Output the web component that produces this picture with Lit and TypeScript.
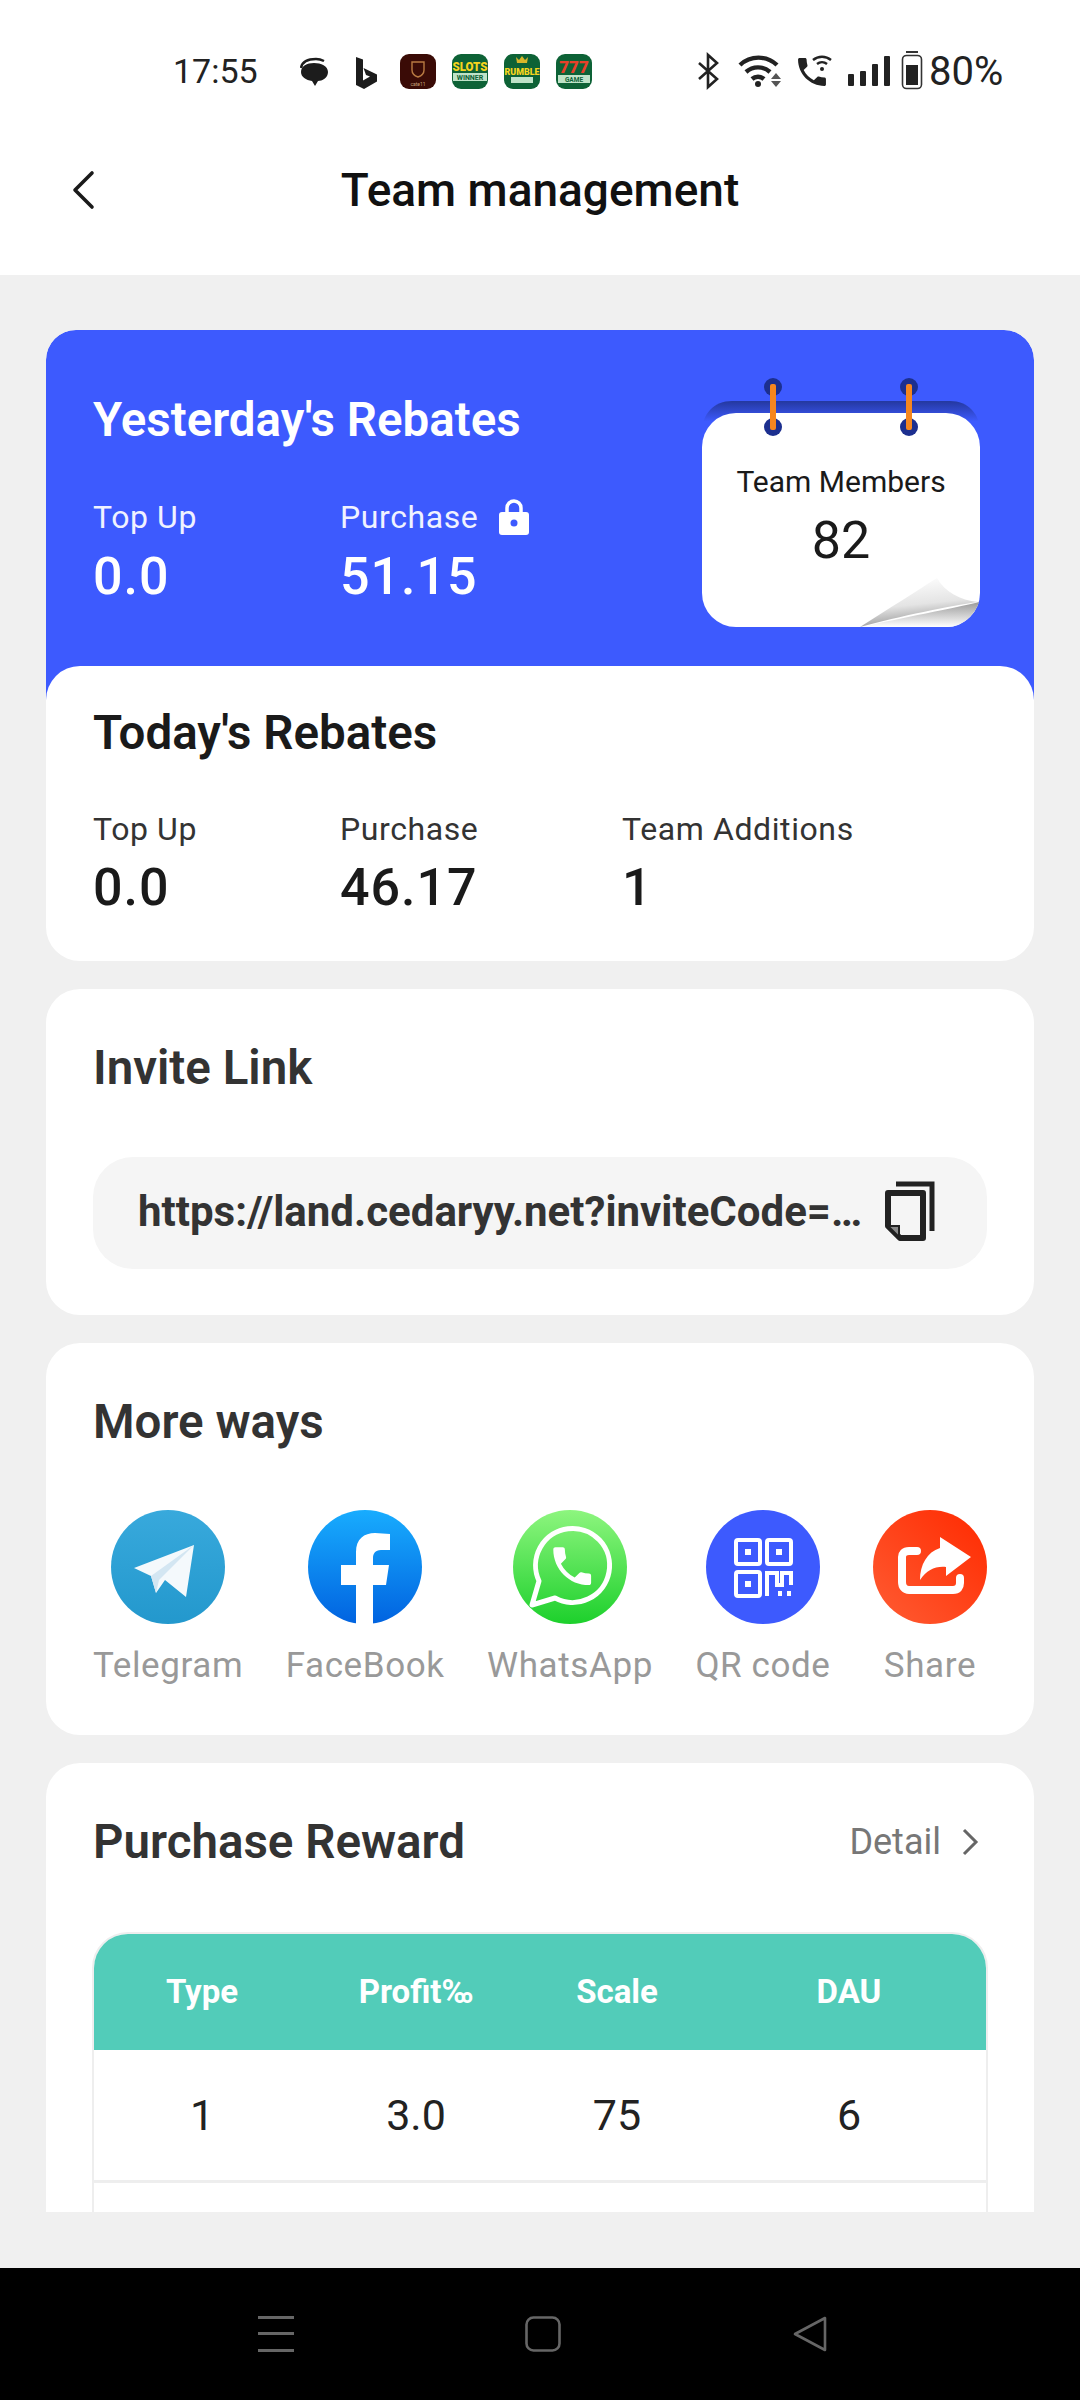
import {LitElement, html, css, svg} from 'lit';
import {customElement} from 'lit/decorators.js';

const shareItems = [
    {label: 'Telegram', icon: 'telegram'},
    {label: 'FaceBook', icon: 'facebook'},
    {label: 'WhatsApp', icon: 'whatsapp'},
    {label: 'QR code', icon: 'qr'},
    {label: 'Share', icon: 'share'},
];

const CALL_PATH = 'M6.62 10.79c1.44 2.83 3.76 5.14 6.59 6.59l2.2-2.2c.27-.27.67-.36 1.02-.24 1.12.37 2.33.57 3.57.57.55 0 1 .45 1 1V20c0 .55-.45 1-1 1-9.39 0-17-7.61-17-17 0-.55.45-1 1-1h3.5c.55 0 1 .45 1 1 0 1.25.2 2.45.57 3.57.11.35.03.74-.25 1.02l-2.2 2.2z';

function shareIcon(name: string) {
    switch (name) {
        case 'telegram':
            return svg`
                <defs><linearGradient id="tg" x1="0" y1="0" x2="0" y2="1"><stop offset="0" stop-color="#38a9dc"/><stop offset="1" stop-color="#2398cd"/></linearGradient></defs>
                <circle cx="57" cy="57" r="57" fill="url(#tg)"/>
                <path d="M83 35L23 58l17 8 5 17 9-13 21 17z" fill="#f4f9fc"/>
                <path d="M83 35L40 66l5 17 3-13z" fill="#d3e6f2"/>`;
        case 'facebook':
            return svg`
                <defs><linearGradient id="fb" x1="0" y1="0" x2="0" y2="1"><stop offset="0" stop-color="#18acfe"/><stop offset="1" stop-color="#0163e0"/></linearGradient></defs>
                <circle cx="57" cy="57" r="57" fill="url(#fb)"/>
                <path d="M48 114V75H33V55H48V42C48 29 56 23 67 23C72 23 77 24 82 24V40H73C67 40 65 44 65 48V55H81L78 75H65V114Z" fill="#fff"/>`;
        case 'whatsapp':
            return svg`
                <defs><linearGradient id="wa" x1="0" y1="0" x2="0" y2="1"><stop offset="0" stop-color="#8df57e"/><stop offset="1" stop-color="#1dd02c"/></linearGradient></defs>
                <circle cx="57" cy="57" r="57" fill="url(#wa)"/>
                <path d="M19 95l7-24A37 37 0 1 1 42 88z" fill="none" stroke="#fff" stroke-width="5" stroke-linejoin="round"/>
                <path d="${CALL_PATH}" fill="#fff" transform="translate(34 31) scale(2.1)"/>`;
        case 'qr':
            return svg`
                <circle cx="57" cy="57" r="57" fill="#3d5afe"/>
                <g fill="none" stroke="#fff" stroke-width="4">
                    <rect x="30" y="30" width="24" height="24" rx="2"/>
                    <rect x="61" y="30" width="24" height="24" rx="2"/>
                    <rect x="30" y="62" width="24" height="24" rx="2"/>
                    <path d="M61 86V63h10v12h5V63h9v12"/>
                </g>
                <g fill="#fff">
                    <rect x="39" y="39" width="6" height="6"/>
                    <rect x="70" y="39" width="6" height="6"/>
                    <rect x="39" y="71" width="6" height="6"/>
                    <rect x="72" y="81" width="4" height="5"/>
                    <rect x="81" y="81" width="4" height="5"/>
                </g>`;
        default:
            return svg`
                <defs><linearGradient id="sh" x1="1" y1="0" x2="0" y2="1"><stop offset="0" stop-color="#ff2a00"/><stop offset="1" stop-color="#ff5c33"/></linearGradient></defs>
                <circle cx="57" cy="57" r="57" fill="url(#sh)"/>
                <path d="M44 41H36C31 41 29 44 29 47V72C29 77 32 80 36 80H80C85 80 87 77 87 73V68" fill="none" stroke="#fff" stroke-width="8" stroke-linecap="round"/>
                <path d="M67 27L98 47 73 66V57C62 56 54 60 47 70 47 55 54 42 67 38z" fill="#fff"/>`;
    }
}

@customElement('app-root')
export class AppRoot extends LitElement {
    static styles = css`
        :host {
            display: block;
            width: 1080px;
            height: 2400px;
            overflow: hidden;
            font-family: Roboto, "Noto Sans", sans-serif;
            background: #f0f0f0;
            color: #1a1a1a;
        }

        .page {
            display: flex;
            flex-direction: column;
            height: 2400px;
        }

        .top {
            background: #fff;
            height: 275px;
            flex: none;
        }

        .status {
            display: flex;
            align-items: center;
            height: 94px;
            padding: 24px 0 0 173px;
        }

        .time {
            width: 127px;
            font-size: 34px;
            color: #222;
        }

        .status svg {
            display: block;
            height: 40px;
        }

        .apps {
            width: 292px;
            margin-right: 106px;
        }

        .system {
            width: 226px;
            margin-right: 5px;
        }

        .battery {
            font-size: 40px;
            color: #222;
        }

        .bar {
            display: flex;
            align-items: center;
            justify-content: center;
            position: relative;
            height: 144px;
            font-size: 46px;
            font-weight: 500;
            color: #111;
        }

        .back {
            position: absolute;
            left: 70px;
            top: 52px;
            width: 26px;
            height: 40px;
        }

        .content {
            flex: none;
            height: 1882px;
            margin: 55px 46px 0 46px;
            overflow: hidden;
            border-radius: 30px 30px 0 0;
        }

        .blue {
            display: flex;
            justify-content: space-between;
            height: 370px;
            box-sizing: border-box;
            padding: 0 54px 0 47px;
            background: #3d5afe;
            color: #fff;
            border-radius: 30px 30px 0 0;
        }

        .card {
            background: #fff;
            border-radius: 34px;
            padding: 0 47px;
            margin-bottom: 28px;
        }

        .today {
            position: relative;
            height: 295px;
            margin-top: -34px;
        }

        .h {
            font-size: 47.5px;
            font-weight: 600;
            line-height: 60px;
            color: #333;
        }

        .blue .h {
            padding-top: 60px;
            color: #fff;
        }

        .today .h {
            padding-top: 37px;
            color: #1a1a1a;
        }

        .stats {
            display: grid;
            grid-template-columns: 247px 282px 1fr;
            margin-top: 48px;
        }

        .blue .stats {
            grid-template-columns: 247px 1fr;
            margin-top: 49px;
        }

        .label {
            display: flex;
            align-items: center;
            gap: 20px;
            font-size: 32px;
            line-height: 36px;
            letter-spacing: 0.6px;
            color: #333;
        }

        .blue .label {
            color: #f0f2ff;
        }

        .value {
            font-size: 52px;
            font-weight: 500;
            line-height: 60px;
            margin-top: 11px;
            letter-spacing: 1px;
        }

        .blue .value {
            margin-top: 12px;
        }

        .calendar {
            position: relative;
            width: 278px;
            height: 240px;
            margin-top: 57px;
            display: flex;
            flex-direction: column;
            align-items: center;
            color: #1a1a1a;
        }

        .calendar svg {
            position: absolute;
            left: 0;
            top: 0;
        }

        .calendar .name {
            position: relative;
            margin-top: 75px;
            font-size: 30px;
            line-height: 40px;
        }

        .calendar .num {
            position: relative;
            margin-top: 9px;
            font-size: 52px;
            line-height: 60px;
        }

        .invite {
            height: 326px;
            box-sizing: border-box;
            padding-top: 49px;
        }

        .pill {
            display: flex;
            align-items: center;
            justify-content: space-between;
            height: 112px;
            margin-top: 59px;
            padding: 0 52px 4px 45px;
            box-sizing: border-box;
            background: #f5f5f5;
            border-radius: 40px;
            font-size: 42px;
            font-weight: 700;
            color: #333;
        }

        .ways {
            height: 392px;
            box-sizing: border-box;
            padding-top: 49px;
        }

        .ways-row {
            display: flex;
            justify-content: space-between;
            margin-top: 58px;
        }

        .way {
            display: flex;
            flex-direction: column;
            align-items: center;
            font-size: 35px;
            line-height: 40px;
            letter-spacing: 0.6px;
            color: #999;
        }

        .way svg {
            display: block;
            margin-bottom: 22px;
        }

        .reward {
            padding-top: 49px;
            border-radius: 34px 34px 0 0;
            height: 449px;
            box-sizing: border-box;
            margin-bottom: 0;
        }

        .reward-head {
            display: flex;
            align-items: center;
            justify-content: space-between;
        }

        .detail {
            display: flex;
            align-items: center;
            gap: 20px;
            padding-right: 8px;
            font-size: 36px;
            color: #777;
        }

        .table {
            margin: 60px -1px 0;
            border: 2px solid #eee;
            border-radius: 36px 36px 0 0;
            overflow: hidden;
        }

        .row {
            display: grid;
            grid-template-columns: 216px 212px 190px 1fr;
            align-items: center;
            text-align: center;
        }

        .row.head {
            height: 116px;
            padding-bottom: 2px;
            box-sizing: border-box;
            background: #52ccb9;
            color: #fff;
            font-size: 33px;
            font-weight: 700;
        }

        .row.body {
            height: 130px;
            border-bottom: 3px solid #eee;
            font-size: 43px;
            color: #222;
        }

        .nav {
            margin-top: 56px;
            flex: 1;
            background: #000;
            display: flex;
            align-items: center;
            justify-content: center;
            gap: 231px;
            padding-left: 6px;
        }

        .nav svg {
            display: block;
        }
    `;

    private renderApps() {
        return html`
            <svg class="apps" viewBox="300 51 292 40" width="292" height="40">
                <path d="M301 72c0-6 6-9 13-9s14 3 14 9-6 9-10 9l-3 5-3-5c-6-1-11-4-11-9z" fill="#1c1c1c"/>
                <path d="M301 68c1-6 7-9 15-9 3 0 6 1 8 2" fill="none" stroke="#1c1c1c" stroke-width="2.5"/>
                <path d="M356 57l7 2.5v21l7-4-4-1.5-2.5-7 13.5 6.5v7l-13 7.5-8-4z" fill="#1c1c1c"/>
                <rect x="400" y="54" width="36" height="35" rx="9" fill="#3a0b06"/>
                <path d="M412 62h12v8c0 4-3 6-6 7-3-1-6-3-6-7z" fill="none" stroke="#b87a42" stroke-width="1.4"/>
                <text x="418" y="86" text-anchor="middle" font-size="5" fill="#c9a27a" font-family="Roboto">cate11</text>
                <rect x="452" y="54" width="36" height="35" rx="9" fill="#0d6236"/>
                <text x="470" y="71" text-anchor="middle" font-size="12" font-weight="900" fill="#f7d51d" font-family="Roboto" textLength="35" lengthAdjust="spacingAndGlyphs">SLOTS</text>
                <rect x="453" y="73" width="34" height="8" fill="#bfe3c8"/>
                <text x="470" y="80" text-anchor="middle" font-size="7" font-weight="700" fill="#0d6236" font-family="Roboto">WINNER</text>
                <rect x="504" y="54" width="36" height="35" rx="9" fill="#0d6236"/>
                <path d="M517 63l-1-6 3 3 3-4 3 4 3-3-1 6z" fill="#d8b62a"/>
                <text x="522" y="75" text-anchor="middle" font-size="9.5" font-weight="900" fill="#f7d51d" font-family="Roboto" textLength="35" lengthAdjust="spacingAndGlyphs">RUMBLE</text>
                <rect x="511" y="77" width="22" height="6" fill="#bfe3c8"/>
                <rect x="556" y="54" width="36" height="35" rx="9" fill="#0d6236"/>
                <text x="574" y="73" text-anchor="middle" font-size="17" font-weight="900" fill="#e8402a" font-family="Roboto">777</text>
                <rect x="558" y="75" width="32" height="8" fill="#bfe3c8"/>
                <text x="574" y="82" text-anchor="middle" font-size="6.5" font-weight="700" fill="#0d6236" font-family="Roboto">GAME</text>
            </svg>
        `;
    }

    private renderSystem() {
        return html`
            <svg class="system" viewBox="698 51 226 40" width="226" height="40">
                <path d="M699 63l18 16-9 8V55l9 8-18 16" fill="none" stroke="#222" stroke-width="2.6"/>
                <g fill="none" stroke="#222" stroke-width="4.4">
                    <path d="M740 65A27 27 0 0 1 777 65"/>
                    <path d="M746 72A18 18 0 0 1 770 72"/>
                    <path d="M752 79A9 9 0 0 1 764 79"/>
                </g>
                <circle cx="758" cy="84" r="3" fill="#222"/>
                <path d="M776 73l5 6h-10zM776 87l5-6h-10z" fill="#555"/>
                <path d="${CALL_PATH}" fill="#222" transform="translate(793.4 53.4) scale(1.55)"/>
                <g fill="none" stroke="#222" stroke-width="2.4">
                    <path d="M813 60A14 14 0 0 1 831 60"/>
                    <path d="M817 64A8 8 0 0 1 827 64"/>
                </g>
                <circle cx="822" cy="69" r="2" fill="#222"/>
                <g fill="#222">
                    <rect x="848" y="74" width="6" height="12" rx="1"/>
                    <rect x="860" y="71" width="6" height="15" rx="1"/>
                    <rect x="872" y="64" width="6" height="22" rx="1"/>
                    <rect x="884" y="56" width="6" height="30" rx="1"/>
                </g>
                <rect x="906" y="51" width="12" height="2" fill="#333"/>
                <rect x="902.5" y="55.5" width="19" height="33" rx="4" fill="none" stroke="#333" stroke-width="1.6"/>
                <rect x="906" y="65" width="12" height="20" fill="#222"/>
            </svg>
        `;
    }

    private renderCalendar() {
        return html`
            <svg viewBox="702 387 278 240" width="278" height="240">
                <defs>
                    <linearGradient id="curl" x1="0.3" y1="0" x2="0.55" y2="1">
                        <stop offset="0" stop-color="#fff"/>
                        <stop offset="0.55" stop-color="#e4e4e4"/>
                        <stop offset="1" stop-color="#8f8f8f"/>
                    </linearGradient>
                    <linearGradient id="fold" x1="0" y1="0" x2="0" y2="1">
                        <stop offset="0" stop-color="#9a9a9a"/>
                        <stop offset="1" stop-color="#fff"/>
                    </linearGradient>
                    <linearGradient id="backing" x1="0" y1="0" x2="0" y2="1">
                        <stop offset="0" stop-color="#24389f"/>
                        <stop offset="0.5" stop-color="#3d5afe"/>
                    </linearGradient>
                </defs>
                <path d="M702 442v-10c0-18 12-31 30-31h218c18 0 30 13 30 31v10z" fill="url(#backing)"/>
                <rect x="702" y="413" width="278" height="214" rx="34" fill="#fff"/>
                <path d="M862 627C900 618 955 608 979 602 975 615 962 627 948 627z" fill="url(#fold)"/>
                <path d="M860 627C890 608 915 592 937 578 945 592 960 600 978 602 950 606 900 616 860 627z" fill="url(#curl)"/>
                <g fill="#1c2f8f">
                    <circle cx="773" cy="427" r="9"/>
                    <circle cx="909" cy="427" r="9"/>
                </g>
            </svg>
            <svg style="top:-14px;overflow:visible" viewBox="702 373 278 70" width="278" height="70">
                <g fill="#1c2f8f">
                    <circle cx="773" cy="387" r="9"/>
                    <circle cx="909" cy="387" r="9"/>
                </g>
                <g fill="#f5861f">
                    <rect x="770" y="384" width="6" height="46" rx="2"/>
                    <rect x="906" y="384" width="6" height="46" rx="2"/>
                </g>
            </svg>
            <div class="name">Team Members</div>
            <div class="num">82</div>
        `;
    }

    render() {
        return html`
            <div class="page">
                <div class="top">
                    <div class="status">
                        <span class="time">17:55</span>
                        ${this.renderApps()}
                        ${this.renderSystem()}
                        <span class="battery">80%</span>
                    </div>
                    <div class="bar">
                        <svg class="back" viewBox="0 0 26 40">
                            <path d="M22 3L5 20l17 17" fill="none" stroke="#1a1a1a" stroke-width="3.6" stroke-linecap="round" stroke-linejoin="round"/>
                        </svg>
                        Team management
                    </div>
                </div>

                <div class="content">
                    <div class="blue">
                        <div>
                            <div class="h">Yesterday's Rebates</div>
                            <div class="stats">
                                <div>
                                    <div class="label">Top Up</div>
                                    <div class="value">0.0</div>
                                </div>
                                <div>
                                    <div class="label">
                                        Purchase
                                        <svg width="32" height="36" viewBox="0 0 32 36">
                                            <path d="M9 15V9a7 7 0 0 1 14 0v6" fill="none" stroke="#fff" stroke-width="3.5"/>
                                            <rect x="1" y="13" width="30" height="23" rx="3" fill="#fff"/>
                                            <circle cx="16" cy="24" r="3.5" fill="#3d5afe"/>
                                        </svg>
                                    </div>
                                    <div class="value">51.15</div>
                                </div>
                            </div>
                        </div>
                        <div class="calendar">${this.renderCalendar()}</div>
                    </div>

                    <div class="card today">
                        <div class="h">Today's Rebates</div>
                        <div class="stats">
                            <div>
                                <div class="label">Top Up</div>
                                <div class="value">0.0</div>
                            </div>
                            <div>
                                <div class="label">Purchase</div>
                                <div class="value">46.17</div>
                            </div>
                            <div>
                                <div class="label">Team Additions</div>
                                <div class="value">1</div>
                            </div>
                        </div>
                    </div>

                    <div class="card invite">
                        <div class="h">Invite Link</div>
                        <div class="pill">
                            <span>https://land.cedaryy.net?inviteCode=…</span>
                            <svg width="50" height="60" viewBox="0 0 50 60">
                                <path d="M11 3H47V50" fill="none" stroke="#222" stroke-width="5"/>
                                <path d="M3 12H38V57H15L3 45z" fill="none" stroke="#222" stroke-width="6" stroke-linejoin="round"/>
                                <path d="M3 45H14V56z" fill="#888" stroke="#222" stroke-width="2"/>
                            </svg>
                        </div>
                    </div>

                    <div class="card ways">
                        <div class="h">More ways</div>
                        <div class="ways-row">
                            ${shareItems.map((item) => html`
                                <div class="way">
                                    <svg width="114" height="114" viewBox="0 0 114 114">${shareIcon(item.icon)}</svg>
                                    ${item.label}
                                </div>
                            `)}
                        </div>
                    </div>

                    <div class="card reward">
                        <div class="reward-head">
                            <div class="h">Purchase Reward</div>
                            <div class="detail">
                                Detail
                                <svg width="18" height="30" viewBox="0 0 18 30">
                                    <path d="M3 3l12 12L3 27" fill="none" stroke="#666" stroke-width="3"/>
                                </svg>
                            </div>
                        </div>
                        <div class="table">
                            <div class="row head">
                                <div>Type</div>
                                <div>Profit‰</div>
                                <div>Scale</div>
                                <div>DAU</div>
                            </div>
                            <div class="row body">
                                <div>1</div>
                                <div>3.0</div>
                                <div>75</div>
                                <div>6</div>
                            </div>
                            <div class="row body"></div>
                        </div>
                    </div>
                </div>

                <div class="nav">
                    <svg width="36" height="36" viewBox="0 0 36 36">
                        <g fill="#666">
                            <rect y="0" width="36" height="3"/>
                            <rect y="16" width="36" height="3"/>
                            <rect y="33" width="36" height="3"/>
                        </g>
                    </svg>
                    <svg width="36" height="36" viewBox="0 0 36 36">
                        <rect x="1.5" y="1.5" width="33" height="33" rx="7" fill="none" stroke="#666" stroke-width="2.6"/>
                    </svg>
                    <svg width="36" height="36" viewBox="0 0 36 36">
                        <path d="M33 2v32L3 18z" fill="none" stroke="#666" stroke-width="2.6" stroke-linejoin="round"/>
                    </svg>
                </div>
            </div>
        `;
    }
}
